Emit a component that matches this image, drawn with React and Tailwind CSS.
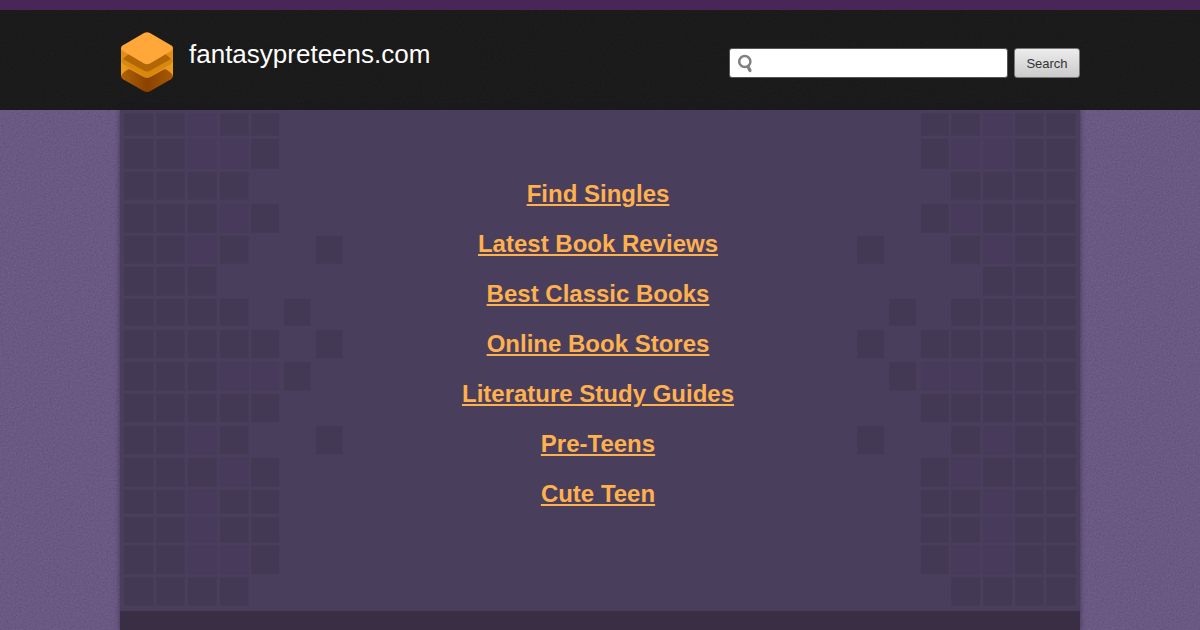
const links = [
  "Find Singles",
  "Latest Book Reviews",
  "Best Classic Books",
  "Online Book Stores",
  "Literature Study Guides",
  "Pre-Teens",
  "Cute Teen",
];

// [top, bottom, cells from the outer edge inwards]; D = dark, P = tinted
const rows = [
  [3, 26, "DDPDD.."],
  [28.5, 59, "DDPPD.."],
  [61.5, 90, "DDDD..."],
  [93.5, 123, "DDDPD.."],
  [125.5, 154, "DDPD..D"],
  [156.5, 186, "DDD...."],
  [188.5, 216, "DDDD.D."],
  [220, 248.5, "DDDDD.D"],
  [252, 281, "DDDPPD."],
  [283.5, 312.5, "DDDDD.."],
  [316, 344.5, "DDPD..D"],
  [347.5, 377, "DDDPD.."],
  [379.5, 404, "DDPDD.."],
  [407, 433, "DDPDD.."],
  [435, 464.5, "DDPPD.."],
  [467, 496, "DDDD..."],
];
const cols = [
  [4, 34],
  [36, 65],
  [67.5, 97],
  [99.5, 129],
  [131, 159.5],
  [163.5, 191],
  [195.5, 223],
];

function Mosaic({ className }) {
  return (
    <svg width="224" height="500" viewBox="0 0 224 500" className={className} aria-hidden="true">
      {rows.map(([y1, y2, cells]) => (
        <g key={y1}>
          {[...cells].map((c, i) =>
            c === "." ? null : (
              <rect
                key={i}
                x={cols[i][0]}
                y={y1}
                width={cols[i][1] - cols[i][0]}
                height={y2 - y1}
                fill={c === "D" ? "#443954" : "#473a5b"}
                stroke="#4a3f5b"
                strokeOpacity="0.6"
              />
            )
          )}
        </g>
      ))}
    </svg>
  );
}

function Grain({ id, opacity }) {
  return (
    <svg className="absolute inset-0 h-full w-full" aria-hidden="true">
      <filter id={id} colorInterpolationFilters="sRGB">
        <feTurbulence type="fractalNoise" baseFrequency="0.6" numOctaves="2" stitchTiles="stitch" />
        <feColorMatrix type="saturate" values="0.3" />
        <feComponentTransfer>
          <feFuncA type="linear" slope="0" intercept="1" />
        </feComponentTransfer>
      </filter>
      <rect width="100%" height="100%" filter={`url(#${id})`} opacity={opacity} />
    </svg>
  );
}

function Logo() {
  return (
    <svg width="54" height="62" viewBox="0 0 54 62" className="shrink-0" aria-hidden="true">
      <defs>
        <linearGradient id="low" x1="0" x2="1">
          <stop offset="0" stopColor="#b06208" />
          <stop offset="0.5" stopColor="#8a4200" />
          <stop offset="1" stopColor="#a85a06" />
        </linearGradient>
        <linearGradient id="mid" x1="0" x2="1">
          <stop offset="0" stopColor="#ee9c1c" />
          <stop offset="0.5" stopColor="#d5860f" />
          <stop offset="1" stopColor="#ee9c1c" />
        </linearGradient>
      </defs>
      <path d="M1 36V45Q1 47 3 48.200L24 60.300Q27 61.800 30 60.300L51 48.200Q53 47 53 45V36L27 30Z" fill="url(#low)" />
      <path d="M1 17V45Q2 42.500 4.500 40.800L7 39Q9 37.700 11 39L24 46.300Q27 47.800 30 46.300L43 39Q45 37.700 47 39L49.500 40.800Q52 42.500 53 45V17Z" fill="url(#mid)" />
      <path d="M1 30Q2 28 4.500 26.500L9 23.500H45L49.500 26.500Q52 28 53 30L51 33L30 44.600Q27 46 24 44.600L3 33Z" fill="#d9880e" />
      <path d="M3 28L8 23H46L51 28L30 39.800Q27 41.200 24 39.800Z" fill="#b36606" />
      <path d="M1 17V30Q2 27 5 25.500L8 23.800L12 20L42 20L46 23.800L49 25.500Q52 27 53 30V17Z" fill="#e08f14" />
      <path d="M3 14.300L24 2Q27 .6 30 2L51 14.300Q55 17 51 19.900L30 32.500Q27 34 24 32.500L3 19.900Q-1 17 3 14.300Z" fill="#ffa738" />
    </svg>
  );
}

export default function App() {
  return (
    <div className="flex h-[630px] w-full flex-col overflow-hidden bg-[#675484] font-['Liberation_Sans',Arial,sans-serif]">
      <div className="h-2.5 shrink-0 bg-[#482658]" />
      <header className="relative h-[100px] shrink-0 bg-[#171717]">
        <Grain id="grain-dark" opacity="0.035" />
        <div className="relative mx-auto flex h-full w-[960px] justify-between">
          <div className="flex items-start pt-[21px]">
            <Logo />
            <h1 className="ml-[15px] mt-[3px] text-[26px] leading-10 text-white">fantasypreteens.com</h1>
          </div>
          <form className="flex gap-1.5 pt-[38px]" onSubmit={(e) => e.preventDefault()}>
            <label className="flex h-[30px] w-[279px] items-center rounded-[3px] border border-[#555] bg-white pl-[7px]">
              <svg width="16" height="20" viewBox="0 0 16 20" fill="none" stroke="#808080" aria-hidden="true">
                <circle cx="7.800" cy="8.500" r="5.600" strokeWidth="2.500" />
                <path d="M11 13.500L13 17.500" strokeWidth="3.200" strokeLinecap="round" />
              </svg>
              <input aria-label="Search" className="w-60 outline-none" />
            </label>
            <button className="h-[30px] w-[66px] rounded-[3px] border border-[#777] bg-linear-to-b from-[#ececec] to-[#cbcbcb] pt-px text-[13px] text-[#333]">
              Search
            </button>
          </form>
        </div>
      </header>
      <div className="relative flex-1">
        <Grain id="grain-violet" opacity="0.12" />
        <main className="relative mx-auto flex h-full w-[960px] flex-col bg-[#4a3e5d] shadow-[0_0_5px_rgba(40,20,50,0.6)]">
          <div className="flex h-[501px] shrink-0 justify-between">
            <Mosaic />
            <nav className="flex flex-col items-center pr-1 pt-[59px]">
              {links.map((text) => (
                <a
                  key={text}
                  href="#"
                  className="h-[50px] text-2xl leading-[50px] font-bold text-[#ffb14d] underline"
                >
                  {text}
                </a>
              ))}
            </nav>
            <Mosaic className="-scale-x-100" />
          </div>
          <div className="flex-1 bg-[#392e43]" />
        </main>
      </div>
    </div>
  );
}
